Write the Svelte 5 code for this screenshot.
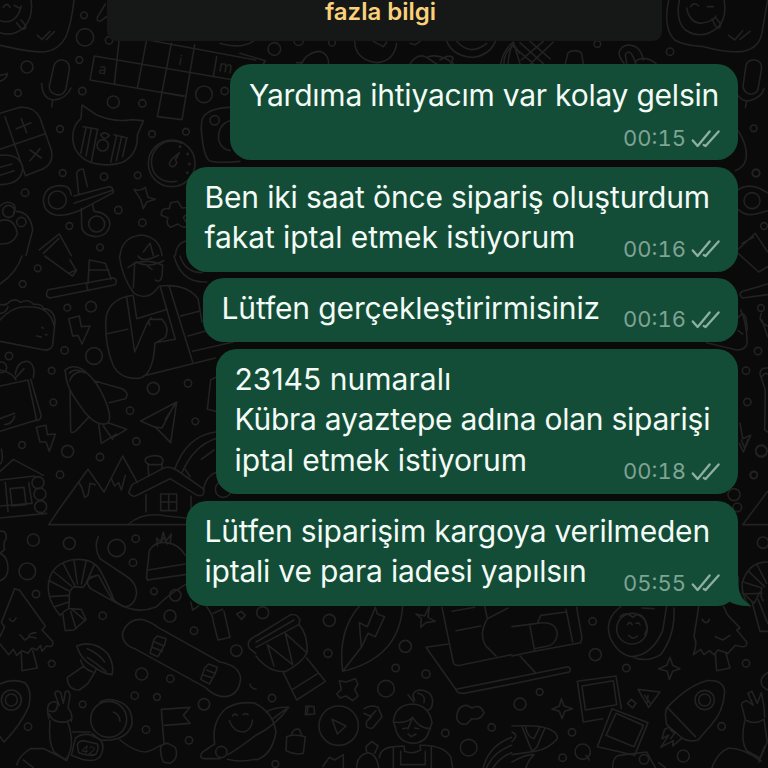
<script lang="ts">
	type Line = { text: string; tracking: number };
	type Message = { lines: Line[]; time: string; size: string; tail?: boolean };
	// Each patch is drawn on a grid three times finer than the page
	type Patch = { x: number; y: number; paths: string[]; dots: number[][]; labels?: [string, number, number, number][] };

	const messages: Message[] = [
		{ lines: [{ text: 'Yardıma ihtiyacım var kolay gelsin', tracking: -0.23 }], time: '00:15', size: 'first' },
		{
			lines: [
				{ text: 'Ben iki saat önce sipariş oluşturdum', tracking: -0.15 },
				{ text: 'fakat iptal etmek istiyorum', tracking: -0.08 },
			],
			time: '00:16',
			size: 'double',
		},
		{ lines: [{ text: 'Lütfen gerçekleştirirmisiniz', tracking: -0.13 }], time: '00:16', size: 'single' },
		{
			lines: [
				{ text: '23145 numaralı', tracking: 0.03 },
				{ text: 'Kübra ayaztepe adına olan siparişi', tracking: -0.25 },
				{ text: 'iptal etmek istiyorum', tracking: -0.07 },
			],
			time: '00:18',
			size: 'triple',
		},
		{
			lines: [
				{ text: 'Lütfen siparişim kargoya verilmeden', tracking: -0.2 },
				{ text: 'iptali ve para iadesi yapılsın', tracking: -0.22 },
			],
			time: '05:55',
			size: 'double',
			tail: true,
		},
	];

	const patches: Patch[] = [
		{
			x: 0,
			y: 0,
			paths: [
				// smiling sticker
				'M0 136 C50 146 82 156 127 156 Q178 153 200 105 Q216 60 222 0',
				'M0 98 Q38 112 72 82 Q101 50 93 0 M0 62 Q48 78 64 18 M10 22 q10 -18 20 0 M42 16 l16 8 M50 68 l14 18 q12 6 14 -8 l-15 -18 M112 106 l14 12 l24 -24 M139 119 l24 -24',
				'M292 52 l24 -40 M292 52 q-3 14 12 10 l18 -14',
				// crossword
				'M283 168 L697 239 M270 240 L550 289 M283 168 L270 240 M357 124 L343 253 M439 124 L412 265 M514 130 L472 350 L546 359 L584 134 M440 119 L767 180 M650 170 L640 230 M480 276 l74 12',
				// microphone
				'M162 196 q8 -18 26 -16 q22 5 20 28 l-10 58 q-8 22 -28 18 q-24 -5 -22 -26 z M125 250 Q127 298 161 300 Q197 298 213 264 M158 301 l-3 20',
				// cat mask
				'M243 355 L246 315 L290 345 Q345 368 393 359 L430 362 L412 405 Q415 460 370 486 Q330 502 274 488 Q218 465 218 410 Q219 376 243 355 z',
				'M250 380 l44 8 M258 384 l-16 76 M274 386 l-16 82 M292 390 l-18 96 M342 404 l40 10 M350 406 l-18 80 M365 410 l-16 72 M380 414 l-12 56 M302 404 q12 -12 26 2 q-14 20 -26 -2',
				// calculator
				'M0 340 L60 322 Q102 318 120 354 L154 450 Q162 490 130 506 L76 527 M15 350 L76 526 M0 448 L136 401 M49 386 l44 -18 M64 356 l16 42 M90 450 l34 24 M120 446 l-30 36 M0 466 Q55 460 68 500 Q68 552 0 554 M0 502 l36 -10 M0 526 l42 -14',
				// gauge
				'M546 430 Q508 412 474 440 Q442 474 462 518 Q485 552 530 544 M508 490 q0 10 12 10 q16 -10 6 -20 l12 -22 l-23 20 z',
				// camera
				'M690 322 Q630 324 610 350 Q600 372 606 410 Q612 470 628 482 Q650 490 720 484 M690 362 Q652 374 656 420 Q664 448 690 452',
				// scissors
				'M214 585 Q212 555 178 557 Q132 560 130 602 Q132 640 172 646 Q210 646 250 626 L340 578 Q340 560 326 560 L222 588 M236 584 L230 520 Q234 506 250 508 L262 560 M222 610 L340 570 M244 625 L245 680 Q248 706 286 710 Q325 708 330 672 Q326 638 282 634 L278 614',
				'M402 568 q18 8 34 -6 l8 30 l22 6 l-26 8 l-10 20 l-8 -28 z',
				'M512 608 l22 -4 l12 20 q20 -4 24 10 l-20 18 l14 24 q-12 12 -30 -4 l-22 10 q-16 -8 -8 -28 l-20 -8 q-2 -24 24 -20 z',
				'M0 618 Q22 598 42 614 q8 16 -2 24 M0 662 Q44 650 52 702 Q40 734 0 732 M50 634 Q92 638 98 690 L78 767 M118 750 L178 702 L214 767 M130 760 l46 -44 M360 767 Q366 710 425 705 Q480 712 486 767 M430 756 l20 -26 l10 36 M526 767 q2 -34 30 -44 M0 244 q22 -8 22 -24 M0 226 l20 -4',
			],
			dots: [
				[252, 46, 10], [255, 112, 26], [327, 121, 11], [81, 201, 18], [238, 180, 10], [54, 279, 10], [247, 273, 11], [340, 306, 18], [427, 310, 11], [612, 283, 25],
				[674, 273, 11], [180, 387, 10], [456, 402, 10], [558, 395, 10], [644, 361, 14], [188, 519, 10], [312, 530, 11], [413, 526, 10], [75, 578, 11], [355, 630, 11],
				[427, 668, 11], [208, 678, 10], [300, 742, 10], [172, 600, 27], [290, 672, 24], [308, 436, 17], [515, 490, 70], [64, 666, 14], [26, 634, 18], [540, 440, 2], [563, 462, 2], [568, 492, 2], [562, 518, 2],
			],
			labels: [['a', 294, 220, 42], ['i', 534, 194, 42], ['m', 654, 214, 48]],
		},
		{
			x: 0,
			y: 256,
			paths: [
				'M0 84 Q50 50 66 0 M134 0 L206 52 L228 42 L210 12 M206 52 l12 8 l12 -18',
				// cake stand
				'M144 101 L340 66 Q354 70 346 86 L150 126 Q132 122 144 101 M264 82 L268 12 L316 22 L334 70 M266 42 l60 0 M258 80 l6 24',
				// taco
				'M0 145 q18 6 28 -8 q18 -12 34 2 q24 -12 38 6 q26 -2 30 12 q34 4 35 40 L158 268 Q148 288 122 280 L0 256 M0 192 Q40 146 90 153 Q152 152 164 216 M0 172 q18 0 24 -20 M110 240 l14 3 M126 214 l4 3 M136 236 l5 0',
				// person reading
				'M358 0 Q366 64 402 112 M402 112 Q445 138 476 92 M466 72 q16 10 20 -12 L488 28 Q448 8 404 22 L400 96 M384 35 l25 -17 q34 20 82 -4 M442 30 l14 10 M414 0 q14 22 62 -2',
				'M398 118 Q318 130 317 200 Q316 270 338 324 Q356 370 418 367 Q460 358 465 260 L526 250 L480 90 Q560 82 594 128 L606 198 M317 234 L383 220 M380 124 L404 288 L438 210 Q446 192 454 186 M400 120 L410 188 L502 160 M450 208 q-10 -20 8 -18 l28 0 q24 24 10 54 l-28 16 M508 92 L578 318 M542 180 L600 165 M430 360 L646 306 M564 240 L636 220 M578 286 L700 258',
				'M206 188 L238 180 L244 212 L270 210 L246 264 L234 238 L218 240 z M109 514 L138 508 L142 536 L166 534 L148 586 L138 558 L120 558 z',
				// bag
				'M46 356 Q50 316 82 316 Q108 324 100 366 M0 342 Q38 350 48 372 M0 390 L84 372 L110 492 L0 526 M92 370 L122 474 Q126 490 110 494 M0 488 l44 -16 M14 506 q24 -2 30 -26 M46 366 l26 -28',
				// penguin
				'M194 344 Q214 324 244 338 Q296 374 322 450 Q338 498 316 504 Q278 510 234 440 Q196 390 196 344 M208 352 Q222 334 254 350 M210 374 Q216 350 246 346 M210 400 L212 524 Q212 534 226 526 L268 482 M282 374 L366 398 Q390 410 376 428 L328 440 M296 504 L304 562 L350 534 M324 500 L380 520 L340 544 M310 510 l28 40',
				// paper plane
				'M530 438 L422 495 L468 515 L512 560 z M524 444 L486 516 L462 512 M530 438 l-34 52',
				// mountains
				'M172 767 L264 640 L312 708 L368 600 L412 680 M236 678 l10 18 l8 28 l10 -6 l6 -36 l16 4 M334 668 l10 22 l12 -10 l8 22 l12 -44',
				// chalet
				'M386 710 L396 686 L488 638 Q508 628 530 642 L612 700 Q614 724 592 718 L510 668 L414 716 Q400 728 386 710 M438 716 V767 M573 720 V767 M444 628 L446 658 M486 622 V638 M438 606 q20 -12 44 -4 q14 14 0 24 l-34 0 q-18 -8 -10 -20 M482 714 H530 V764 H482 z M506 714 V764 M482 738 H530',
				// log cabin
				'M0 646 L40 610 L130 658 M0 624 q12 -10 4 -44 M0 672 L104 660 M30 698 L72 694 L78 746 L36 750 z M16 680 L24 767 M86 680 L96 740 M0 750 L96 742',
				'M524 640 Q560 540 646 528 M546 650 Q580 570 646 548 M604 610 l38 -28 M646 650 q-28 10 -36 50 M522 0 Q544 82 620 78 M540 0 q16 50 66 50 M646 364 L632 372 L622 460 L646 466 M556 640 l14 22',
			],
			dots: [
				[113, 37, 10], [68, 84, 10], [202, 155, 10], [273, 152, 16], [194, 283, 11], [27, 300, 11], [282, 300, 25], [155, 344, 10], [160, 439, 10], [460, 397, 18],
				[564, 382, 11], [390, 464, 11], [586, 496, 10], [409, 556, 11], [66, 567, 10], [203, 586, 18], [300, 603, 11], [180, 656, 11], [114, 680, 18], [120, 714, 18], [122, 752, 18], [4, 334, 16], [670, 700, 24],
			],
		},
		{
			x: 0,
			y: 512,
			paths: [
				'M146 38 H556 M146 38 L172 0 M0 18 L140 4 M386 36 Q430 -2 500 12 L556 18 M0 58 q22 -4 18 24 q-10 6 -4 30 l-14 12 M0 124 q24 10 24 44 q0 30 -24 38',
				// prawn
				'M180 310 Q138 260 146 210 Q156 156 214 144 Q276 134 300 174 Q330 230 344 270 M180 310 Q188 300 206 290 L208 262 Q206 232 222 224 L248 226 Q258 218 268 200 L290 190 M148 206 L206 236 M162 180 L214 222 M190 156 L224 220 M222 146 L232 216 M258 148 L244 216 M282 160 L258 214 M150 254 L206 250 M164 284 L206 270 M188 306 L196 356 L222 354 L258 322 L244 292 L208 290 M212 298 l16 52 M216 292 l40 34',
				'M266 196 L296 190 Q324 244 340 266 M262 206 Q260 228 290 240 L370 284 Q404 286 410 242 Q408 210 378 192 L300 140 Q280 106 295 74 M340 264 Q400 312 470 284 Q502 250 556 218',
				// bobble hat
				'M440 188 L448 116 Q464 86 500 92 Q536 96 556 130 M444 174 L556 156 M442 204 L556 188 M440 188 Q438 200 444 206 M472 102 l-2 -24 l12 12 l8 -30 l8 28 l16 -22 l-4 30 M480 94 l12 -18 l10 20',
				// fir tree
				'M0 374 L14 344 L4 332 L44 230 L58 234 L136 342 L126 354 L158 388 Q162 408 140 402 L126 418 L122 400 L110 414 L96 408 L84 424 L66 416 L50 430 L40 412 L26 428 L0 396 M64 424 L66 476 L112 468 L98 416 M28 320 q10 18 20 -2 M60 368 l14 16 l16 -10 l18 4 M86 376 q-2 -12 22 -14',
				// mushroom
				'M230 402 Q282 382 324 426 Q344 460 336 488 Q310 486 278 462 Q242 442 230 402 M242 444 Q248 470 278 480 M252 462 L202 496 Q202 534 238 534 L264 514 L288 474 M262 410 q34 14 52 40 M262 436 q28 18 56 42',
				// snowboard
				'M408 412 Q364 398 368 362 Q382 322 424 322 Q450 328 474 346 L660 450 Q718 460 722 500 Q716 554 670 554 Q642 552 616 526 z',
				'M462 382 l10 -10 l26 8 l-4 18 l-20 36 l-24 -10 z M456 406 l32 12 M464 390 l28 12 M614 468 l12 -12 l26 10 l-6 18 l-18 32 l-26 -14 z M608 488 l30 10 M620 474 l24 10',
				// rocket nose
				'M0 516 Q38 498 74 512 Q98 534 86 584 Q62 640 12 690 L0 674',
				// waving hand
				'M146 620 Q138 580 150 574 Q166 562 178 580 L164 544 Q170 532 182 542 L190 574 L196 540 Q208 532 210 550 L204 588 Q220 606 214 628 M148 596 q22 10 24 -16 M148 606 Q156 634 198 630 L214 622 M150 626 Q144 690 162 720 L196 744 L206 730 M204 632 Q220 680 212 712 L200 746',
				'M50 758 Q60 728 92 710 L132 710 L192 740 M70 744 L100 767 M218 660 L270 660 M226 680 Q240 664 270 668 L300 682 Q318 704 300 734 Q284 752 246 742 L214 730 z M232 698 Q236 686 252 686 L292 696 Q298 706 288 726 Q280 736 236 722 z',
				'M300 570 Q324 556 354 568 Q398 582 396 636 Q380 690 300 684 L276 664 M340 600 q18 6 20 28 M360 684 Q404 720 438 720 Q460 714 482 700',
				'M492 696 L484 592 L570 586 L550 610 L570 634 L494 640 M482 706 Q486 694 504 694 L526 706 Q538 740 510 754 L490 750 Q480 730 482 706',
				// planet
				'M644 696 Q634 626 680 588 Q720 566 767 574 M644 696 L608 720 Q594 738 614 740 L660 740 M684 728 Q724 704 767 670 M682 742 Q720 752 767 742 M688 626 Q700 660 732 660 Q754 654 758 624 M698 612 q6 -10 14 -2 M730 608 q8 -6 14 0',
				'M620 284 Q640 310 640 330 L654 384 L690 376 L672 298 M640 304 L668 292 M710 306 l14 -8 l12 12 l-12 12 z M767 372 q-32 16 -18 38 l18 14 M572 270 l6 24 l18 -12 M750 516 q0 12 18 16',
			],
			dots: [
				[100, 84, 18], [208, 94, 18], [82, 178, 25], [350, 108, 26], [407, 80, 11], [399, 152, 11], [108, 246, 11], [462, 238, 10], [526, 250, 17], [308, 311, 11],
				[510, 312, 18], [582, 356, 11], [155, 455, 10], [425, 486, 18], [511, 500, 11], [709, 416, 17], [404, 551, 11], [471, 555, 10], [248, 577, 10], [84, 644, 11],
				[438, 653, 11], [612, 577, 17], [567, 685, 11], [34, 564, 30], [34, 564, 18], [326, 622, 54], [664, 720, 17],
			],
			labels: [['42', 242, 722, 34]],
		},
		{
			x: 256,
			y: 592,
			paths: [
				// drum
				'M0 132 L104 68 Q124 64 132 84 L128 98 L0 166 M0 150 L114 84 M130 98 Q154 126 154 180 Q142 210 90 238 Q40 244 0 192 M34 158 L54 222 M34 158 L110 218 M88 124 L110 218 M88 124 L150 180 M82 242 L122 324 L208 268 L152 198 M110 292 L186 244',
				// surfboard
				'M310 42 Q244 118 260 238 Q430 198 440 42 M260 238 L316 166 L310 92 L334 104 L358 46 L364 66 L386 74 L358 134 L336 124 L316 166',
				'M480 66 L506 72 L520 42 L516 76 L538 88 L510 92 L494 106 L496 80 z',
				// laptop
				'M558 46 L592 212 Q594 222 612 220 L767 188 M578 156 L510 166 L598 290 Q604 306 626 304 L767 276 M600 292 L767 258 M588 58 L656 46 M686 42 L694 80 L756 48 M600 116 L674 102 M694 80 Q668 126 688 160 L720 192',
				'M250 266 L270 270 L298 260 L306 276 L296 292 L306 312 L290 326 L270 312 L252 318 L242 306 L256 292 z',
				'M228 382 L270 402 L244 426 z M324 350 Q344 336 366 346 L378 374 L350 408 Q326 412 332 388 L346 374 L324 364 M342 374 l18 -18',
				'M0 336 Q50 360 60 420 Q48 490 0 504 M0 430 Q58 402 98 346 Q58 344 30 360 M48 382 l40 -30',
				'M150 342 l24 2 l2 22 l-28 2 z M156 344 l-2 20 M92 434 Q112 424 148 434 L142 484 Q114 490 90 476 z M106 430 q4 -22 24 -18 l8 20',
				// woman
				'M412 390 Q416 338 470 336 Q520 340 528 392 L518 420 Q510 452 470 454 Q426 450 418 406 L412 390 Q452 396 470 376 Q490 410 524 410 M470 376 l-14 34 M456 426 l10 8 l14 -8 M440 410 l12 -2 M476 408 l12 2 M476 324 Q462 300 490 294 Q528 296 530 328 Q528 358 510 354 M456 308 L474 330 M486 304 q24 4 18 28',
				'M370 498 Q372 468 414 464 L444 462 L446 478 Q470 488 494 474 L492 460 Q560 458 584 494 L590 527 M412 466 V527 M434 478 V518 H508 V478 M526 464 V527 M302 527 Q302 490 334 482 Q362 484 368 527 M332 482 l-2 -18 l18 -16 l18 14 l-10 22 M200 524 L220 496 L236 504 L262 488 L262 527',
				'M602 378 Q604 340 632 340 L648 348 Q672 334 684 362 Q674 386 648 380 L632 396 Q608 400 602 378',
				'M682 527 Q698 462 767 436 M692 527 Q712 480 767 460 M712 527 Q730 496 767 482',
			],
			dots: [
				[20, 62, 18], [220, 85, 18], [216, 184, 12], [448, 163, 18], [419, 228, 11], [510, 246, 12], [390, 290, 25], [48, 318, 11], [248, 401, 59], [707, 406, 11], [568, 423, 11], [638, 467, 25], [58, 516, 10],
			],
		},
		{
			x: 512,
			y: 592,
			paths: [
				'M0 104 L76 94 L86 70 L162 60 M54 102 L68 178 L206 152 L210 138 L194 46 M0 192 L66 178 M162 52 L182 150 M76 94 Q132 84 136 126 Q132 156 108 162 L66 170 M24 192 L70 242 M0 258 L168 224 Q180 230 172 240 L0 276',
				// doughnut
				'M326 44 Q276 82 294 136 Q318 188 360 194 Q420 190 452 116 L464 42 M486 48 Q490 130 446 188 Q404 214 360 194 M324 74 q20 -18 38 2 q20 -20 36 6 l8 26 l-8 20 M346 98 q8 -12 14 0 M372 94 q8 -4 12 4 M350 130 q12 16 26 2 M390 48 l36 2',
				// fir tree
				'M560 44 L546 134 Q558 150 544 188 L566 172 L576 188 L592 176 L606 188 L618 174 L648 184 L670 160 Q708 172 704 150 L674 114 L684 108 L646 68 L634 42 M610 186 L614 236 L654 228 L642 184 M570 82 q14 20 22 0 M610 134 L632 144 L654 130',
				'M474 196 L482 220 L504 230 L482 238 L472 262 L466 238 L440 230 L464 220 z M148 320 L156 342 L182 350 L158 358 L150 380 L142 358 L120 352 L142 342 z',
				// photos
				'M196 268 L312 252 L328 350 M196 268 L214 390 L272 380 M210 282 L304 266 L314 338 L220 354 z M300 350 L408 392 L368 490 L256 464 z M312 364 L394 400 L366 464 L282 430 z',
				'M378 292 L444 300 L410 346 z M398 310 L416 336 M408 310 l-2 22 M346 334 l12 -12 l14 12 l-10 14 z',
				// rocket
				'M466 346 Q526 282 584 266 Q636 262 638 300 Q634 360 598 398 L558 444 Q530 452 510 438 L464 398 Q456 360 466 346 L550 434 M472 406 L458 412 L450 440 L470 430 L446 466 L484 446 L482 462 L508 440 M474 412 L488 424 L476 440',
				'M690 346 Q684 330 704 326 L724 340 L708 304 L720 298 L736 334 L748 302 L756 342 L758 376 M692 350 L700 384 Q728 400 756 382 M698 388 Q684 450 706 478 L744 498 L758 462 M756 382 L766 450 L740 510',
				'M600 527 Q616 482 650 468 Q700 470 748 508 M302 527 Q302 494 322 490 L404 480 L430 527 M440 512 l20 15',
				// fish
				'M0 402 Q62 400 86 404 Q138 414 136 440 Q110 470 70 478 L0 488 M30 404 L60 478 L74 466 L98 410 M40 404 Q48 438 66 440 L84 404 M0 420 q22 10 0 28 M0 510 Q44 486 62 488 M66 488 q-18 18 -24 39 M222 490 l10 14',
				'M690 0 L726 34 L744 0 M720 30 L744 118 L767 118 M738 22 L767 94 M767 242 Q738 258 752 284 L767 294',
			],
			dots: [
				[242, 88, 11], [250, 188, 18], [343, 228, 11], [83, 300, 10], [24, 336, 18], [578, 324, 29], [578, 324, 18], [360, 110, 46], [702, 214, 11], [629, 403, 11], [180, 421, 11], [152, 497, 11], [212, 479, 23], [396, 502, 14], [514, 492, 18],
			],
		},
		{
			x: 600,
			y: 0,
			paths: [
				'M206 0 Q188 84 224 120 Q250 136 312 140 Q382 160 430 154 Q478 144 486 98 L503 0 M238 0 Q226 62 256 90 Q306 122 354 82 Q382 52 372 0 M260 24 Q268 68 304 70 Q340 64 348 48 M272 20 q8 -16 24 -2 M322 20 l18 0 M336 56 l10 22 q14 14 16 -6 l-16 -20 M386 106 l18 14 l24 -28 M420 118 l30 -24',
				'M72 190 Q40 152 78 136 Q120 130 130 180 M80 190 L76 164 Q86 148 96 164 L108 190 M104 186 Q130 162 168 190',
				'M438 196 Q444 178 464 180 Q488 182 484 210 L474 268 Q468 284 448 282 Q426 274 430 252 z M414 286 Q424 304 448 302 Q486 292 492 266 M440 304 l-4 18 M414 392 Q444 438 438 476 Q434 502 406 512',
			],
			dots: [[210, 155, 11], [461, 385, 10], [468, 519, 11]],
		},
		{
			x: 600,
			y: 150,
			paths: [
				'M414 120 Q440 100 476 114 L503 128 M414 178 Q438 202 476 190 L503 182 M412 300 L466 250 L503 306 M414 310 L476 366 L503 350 M426 280 L460 262 M503 402 L428 424 Q412 432 428 444 L503 434',
				'M414 504 Q438 468 442 539 M484 490 q-12 24 18 38',
			],
			dots: [[468, 69, 11], [456, 152, 24], [492, 228, 10], [483, 474, 10]],
		},
		{
			x: 600,
			y: 310,
			paths: [
				'M422 0 Q438 30 442 96 Q440 120 410 120 L320 98 M486 30 L503 80 M414 62 l14 10 M503 174 Q480 172 480 192 L496 240 L494 360 L503 366 M486 200 q8 -14 18 -8 M420 340 L428 386 L452 376 L430 426 L418 400',
			],
			dots: [[474, 123, 11], [438, 182, 11], [442, 276, 11], [484, 424, 17], [461, 495, 11]],
		},
		{
			x: 600,
			y: 440,
			paths: [
				'M424 0 l10 24 l10 -26 M503 154 L428 254 H503 M503 366 Q446 364 426 430 Q426 474 450 500 M430 426 L486 444 M446 394 L494 440 M470 372 L500 430 M426 462 L486 460 M486 444 Q478 470 490 482',
			],
			dots: [[484, 32, 17], [462, 105, 10], [402, 164, 18], [412, 202, 13], [489, 308, 17]],
		},
		{
			x: 220,
			y: 0,
			paths: [
				'M0 130 Q60 148 100 124 M404 124 Q406 180 470 188 Q522 184 530 130 M460 124 L490 140 L500 126 M244 192 Q260 156 300 154 Q326 162 326 192 M230 188 h14 M570 192 Q590 160 616 170 L650 192 M624 170 Q660 160 700 190 M570 130 l16 4 l14 -10 M680 124 Q700 170 760 172 Q810 164 826 124 M710 124 Q750 170 800 130 M852 192 Q850 160 882 134 L899 160 M60 160 L136 182 L130 192',
			],
			dots: [[163, 147, 19], [336, 128, 10], [236, 122, 14]],
		},
		{
			x: 440,
			y: 20,
			paths: [
				'M182 131 Q190 90 220 66 L240 131 M220 66 Q206 98 204 131 M240 68 L310 131 M270 64 L330 116 M310 64 L244 120 M340 66 L272 131 M220 80 L280 131 M376 131 L384 98 Q406 86 424 98 L430 131 M0 120 Q30 100 40 114 L32 131',
			],
			dots: [[472, 72, 10]],
		},
	];
</script>

<main class="chat">
	<svg class="wallpaper" viewBox="0 0 768 768" aria-hidden="true">
		{#each patches as patch}
			<g transform={`translate(${patch.x} ${patch.y}) scale(0.33333)`}>
				{#each patch.paths as d}
					<path {d} />
				{/each}
				{#each patch.dots as [cx, cy, r]}
					<circle {cx} {cy} {r} />
				{/each}
				{#each patch.labels ?? [] as [label, x, y, size]}
					<text {x} {y} font-size={size} transform={`rotate(10 ${x} ${y})`}>{label}</text>
				{/each}
			</g>
		{/each}
	</svg>

	<div class="notice">fazla bilgi</div>

	<div class="messages">
		{#each messages as message}
			<article class={['bubble', message.size]}>
				{#each message.lines as line}
					<p style:letter-spacing={`${line.tracking}px`}>{line.text}</p>
				{/each}
				<span class="meta">
					<time>{message.time}</time>
					<svg class="ticks" viewBox="0 0 29 18">
						<path d="M1.8 10.4 L6.6 16 L18.6 1.4 M12.8 15 L14.6 16 L27.6 1.4" />
					</svg>
				</span>
				{#if message.tail}
					<svg class="tail" viewBox="0 0 30 30">
						<path d="M17.5 0 V8 C17.5 17 21 24 30 29.8 C22 30.4 14 29 7 25 L0 12 Z" />
					</svg>
				{/if}
			</article>
		{/each}
	</div>
</main>

<style>
	:global(body) {
		margin: 0;
		background: #0a0a0a;
	}

	.chat {
		position: relative;
		height: 768px;
		overflow: hidden;
		background: #0a0a0a;
		font-family: Inter, 'Liberation Sans', sans-serif;
	}

	/* Doodles lie behind everything */
	.wallpaper {
		position: absolute;
		inset: 0;
		width: 768px;
		height: 768px;
		fill: none;
		stroke: #222222;
		stroke-width: 4.8;
		stroke-linecap: round;
		stroke-linejoin: round;
	}

	.wallpaper text {
		fill: #242424;
		stroke: none;
	}

	.notice {
		position: relative;
		box-sizing: border-box;
		width: 555px;
		height: 41px;
		margin-left: 107px;
		padding-right: 8px;
		border-radius: 0 0 9px 9px;
		background: #161817;
		color: #fbd17c;
		font-size: 24px;
		font-weight: 600;
		line-height: 23px;
		text-align: center;
	}

	.messages {
		position: relative;
		display: flex;
		flex-direction: column;
		align-items: flex-end;
		gap: 6.5px;
		padding: 23px 30px 0 0;
	}

	.bubble {
		position: relative;
		box-sizing: border-box;
		padding: 10px 19px;
		border-radius: 21px;
		background: #144d37;
		color: #f3fbf6;
	}

	.first {
		width: 508px;
		height: 96px;
		padding-top: 11px;
	}

	.double {
		width: 552.5px;
		height: 105px;
	}

	.single {
		width: 535.5px;
		height: 64px;
	}

	.triple {
		width: 522.5px;
		height: 145.5px;
	}

	p {
		margin: 0;
		font-size: 30px;
		line-height: 40.8px;
		white-space: nowrap;
	}

	.meta {
		position: absolute;
		right: 18px;
		bottom: 9px;
		display: flex;
		align-items: center;
		gap: 5px;
		color: #7fa394;
		font-size: 22px;
		line-height: 27px;
		font-variant-numeric: tabular-nums;
	}

	.first .meta {
		bottom: 8px;
	}

	.ticks {
		width: 29px;
		height: 18px;
		fill: none;
		stroke: #8eafa1;
		stroke-width: 2.3;
		stroke-linecap: round;
		stroke-linejoin: round;
	}

	.tail {
		position: absolute;
		right: -12.5px;
		bottom: 0;
		width: 30px;
		height: 30px;
		fill: #144d37;
	}
</style>
